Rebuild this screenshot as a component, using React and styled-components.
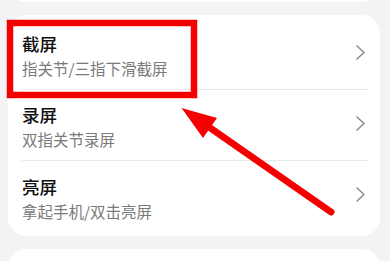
import React from "react";
import styled, { createGlobalStyle } from "styled-components";

const Global = createGlobalStyle`
  html, body { margin: 0; padding: 0; background: #f1f3f5; }
  body { font-family: "Noto Sans CJK SC", "Noto Sans", sans-serif; overflow: hidden; }
`;

const Page = styled.div`
  position: relative;
  width: 390px;
  height: 261px;
  overflow: hidden;
  padding: 0 10px 0 8px;
  box-sizing: border-box;
  display: flex;
  flex-direction: column;
  gap: 13px;
`;

const Card = styled.div`
  background: #ffffff;
  border-radius: 18px;
  padding: 4px 0;
  flex-shrink: 0;
  ${(p) => p.$stub && `height: 40px; margin-top: -38px; padding: 0;`}
  ${(p) => p.$tall && `min-height: 80px;`}
`;

const Row = styled.div`
  display: flex;
  align-items: center;
  margin: 0 12px 0 14px;
  height: 71px;
  box-sizing: border-box;
  border-bottom: ${(p) => (p.$last ? "none" : "1px solid #e8e8e8")};
`;

const Texts = styled.div`
  flex: 1;
  display: flex;
  flex-direction: column;
  gap: 3px;
  padding: 3px 0 0;
`;

const Title = styled.div`
  font-size: 17.5px;
  line-height: 22px;
  font-weight: 500;
  color: #111;
`;

const Sub = styled.div`
  font-size: 15.5px;
  line-height: 20px;
  color: #7a7a7a;
`;

const Chevron = styled.svg`
  width: 9px;
  height: 15px;
  margin-right: 3px;
  margin-top: -4px;
  flex-shrink: 0;
`;

const Overlay = styled.svg`
  position: absolute;
  left: 0;
  top: 0;
  width: 390px;
  height: 261px;
  pointer-events: none;
`;

const items = [
  { t: "截屏", s: "指关节/三指下滑截屏" },
  { t: "录屏", s: "双指关节录屏" },
  { t: "亮屏", s: "拿起手机/双击亮屏" },
];

export default function App() {
  return (
    <>
      <Global />
      <Page>
        <Card $stub />
        <Card>
          {items.map((it, i) => (
            <Row key={it.t} $last={i === items.length - 1}>
              <Texts>
                <Title>{it.t}</Title>
                <Sub>{it.s}</Sub>
              </Texts>
              <Chevron viewBox="0 0 9 15">
                <path d="M1 1 L8 7.5 L1 14" fill="none" stroke="#8a8a8a" strokeWidth="1.5" strokeLinecap="round" strokeLinejoin="round" />
              </Chevron>
            </Row>
          ))}
        </Card>
        <Card $tall />
        <Overlay viewBox="0 0 390 261">
          <rect x="10" y="23" width="184" height="72" fill="none" stroke="#f50000" strokeWidth="6.5" />
          <line x1="206" y1="125" x2="331" y2="212" stroke="#f50000" strokeWidth="7" strokeLinecap="round" />
          <polygon points="181.5,108 217,118 203,138" fill="#f50000" />
        </Overlay>
      </Page>
    </>
  );
}
